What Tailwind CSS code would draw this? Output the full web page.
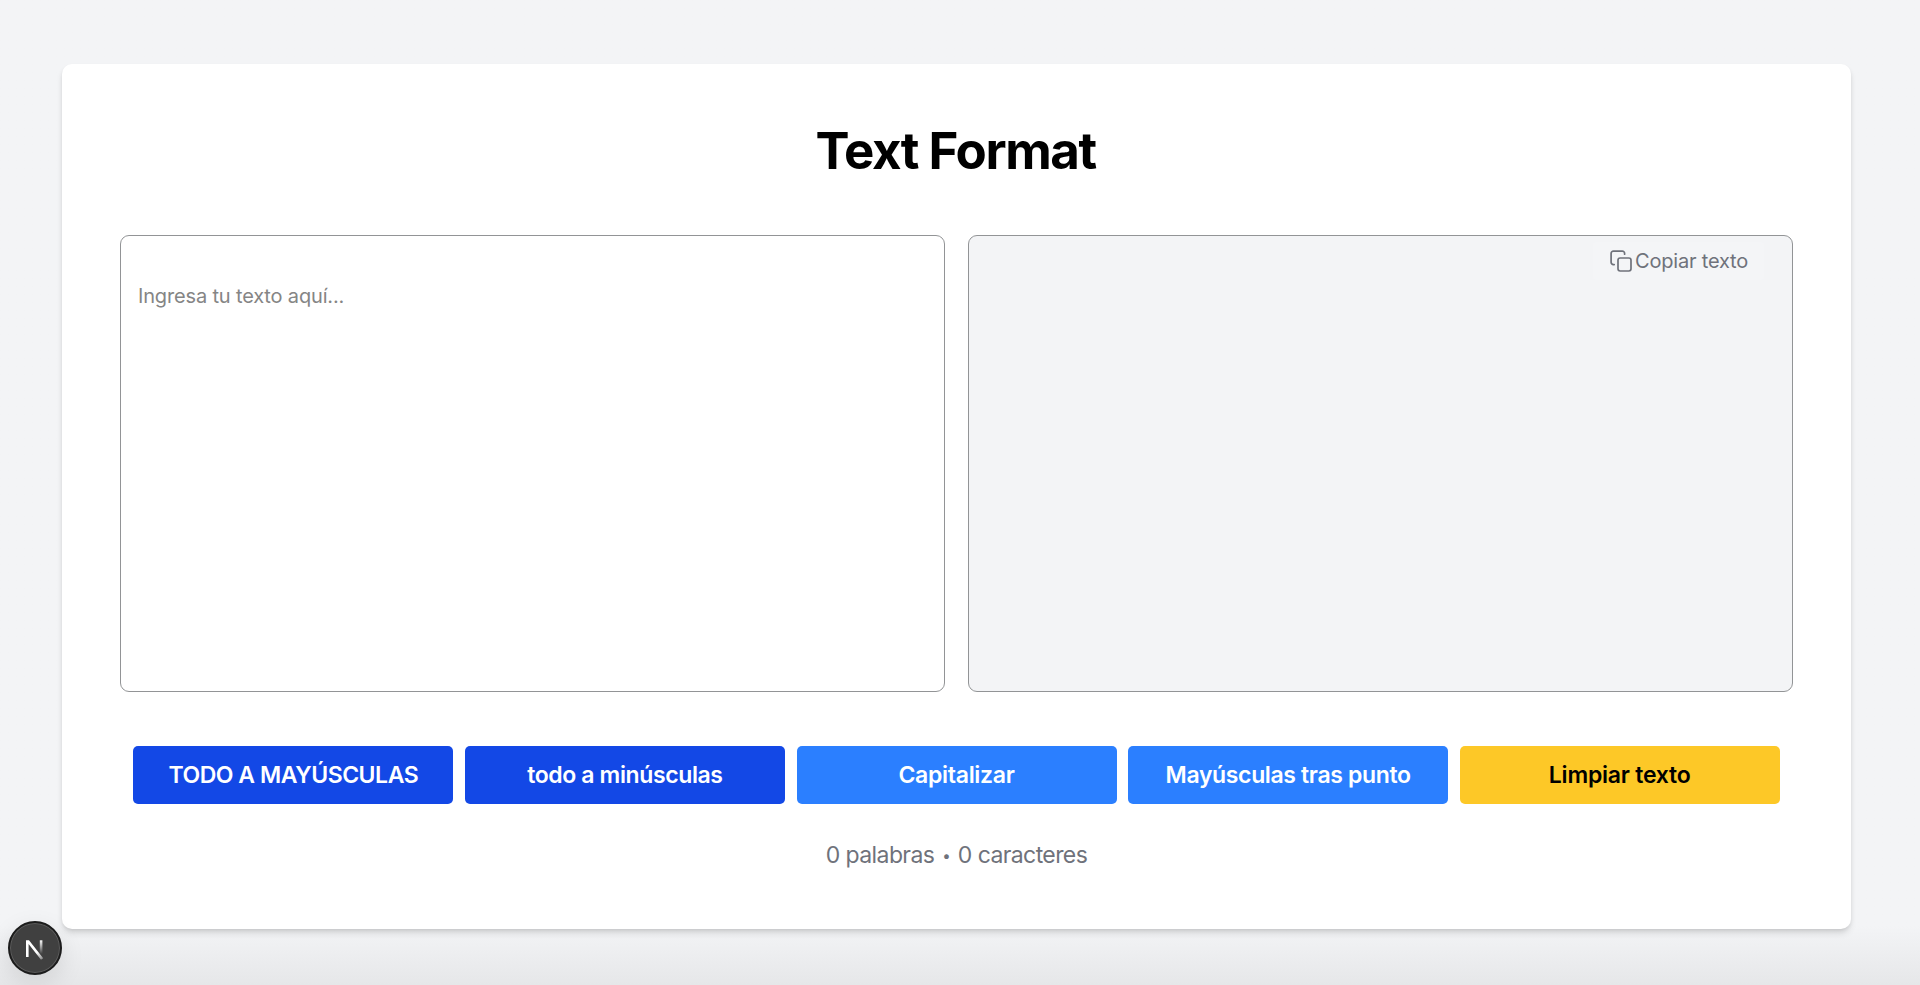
<!DOCTYPE html>
<html lang="es">
<head>
<meta charset="utf-8">
<title>Text Format</title>
<script src="https://cdn.jsdelivr.net/npm/@tailwindcss/browser@4"></script>
</head>
<body class="relative h-[985px] overflow-hidden bg-[#f3f4f6] bg-linear-to-b from-[#f3f4f6] from-94% to-[#e6e7e9] pt-16 pl-[62px] font-[Inter,sans-serif] text-black">
<main class="flex h-[865px] w-[1789px] flex-col items-center rounded-[10px] bg-white px-[58px] pt-14 shadow-[0_5px_7px_-1px_rgba(0,0,0,0.12),0_2px_4px_-1px_rgba(0,0,0,0.1)]">
  <h1 class="pr-[2px] text-[51px] leading-[61px] font-bold tracking-[-1.45px] whitespace-nowrap">Text Format</h1>
  <section class="mt-[54px] grid h-[457px] w-full grid-cols-2 gap-[23px]">
    <textarea class="resize-none rounded-[9px] border border-[#929496] bg-white px-[17px] pt-[45px] text-[20px] leading-[30px] tracking-[-0.16px] placeholder:text-[#858585]" placeholder="Ingresa tu texto aquí..."></textarea>
    <div class="flex items-start justify-end rounded-[9px] border border-[#929496] bg-[#f3f4f6] pt-[6px] pr-[28px]">
      <button class="flex items-center gap-[2px] rounded bg-[#f4f5f7] px-4 py-1 text-[20px] leading-[30px] tracking-[-0.2px] text-[#6f727b]">
        <svg class="size-6" viewBox="0 0 24 24" fill="none" stroke="currentColor" stroke-width="1.7" stroke-linecap="round" stroke-linejoin="round"><rect x="9" y="9" width="13" height="13" rx="2.2"/><path d="M5.2 15.6H4.4A2.3 2.3 0 0 1 2.1 13.3V4.4A2.3 2.3 0 0 1 4.4 2.1H13.3A2.3 2.3 0 0 1 15.6 4.4V5.2"/></svg>
        <span>Copiar texto</span>
      </button>
    </div>
  </section>
  <section class="mt-[54px] flex gap-[11.6px] text-[23px] leading-[58px] font-semibold whitespace-nowrap text-white">
    <button class="h-[58px] w-[320px] rounded-[5px] bg-[#1348e6] tracking-[-0.46px]">TODO A MAYÚSCULAS</button>
    <button class="h-[58px] w-[320px] rounded-[5px] bg-[#1348e6] tracking-[-0.38px]">todo a minúsculas</button>
    <button class="h-[58px] w-[320px] rounded-[5px] bg-[#2b7fff] tracking-[-0.3px]">Capitalizar</button>
    <button class="h-[58px] w-[320px] rounded-[5px] bg-[#2b7fff] tracking-[-0.36px]">Mayúsculas tras punto</button>
    <button class="h-[58px] w-[320px] rounded-[5px] bg-[#fdc827] tracking-[-0.22px] text-black">Limpiar texto</button>
  </section>
  <p class="mt-[34px] h-[34px] text-[23px] leading-[34px] tracking-[-0.6px] text-[#6f727b]">0 palabras <span class="px-[2px] align-[2px] text-[15px] leading-none">•</span> 0 caracteres</p>
</main>
<!-- Next.js dev indicator -->
<div class="absolute top-[921px] left-2 flex size-[54px] items-center justify-center rounded-full border-2 border-[#1c1c1c] bg-[#404040] shadow-[inset_0_0_0_1px_#5c5c5c,0_8px_24px_rgba(0,0,0,0.1)]">
  <svg class="size-[54px] shrink-0" viewBox="0 0 54 54" fill="none">
    <defs>
      <linearGradient id="diag" x1="32" y1="30" x2="38" y2="42" gradientUnits="userSpaceOnUse"><stop stop-color="#fff"/><stop offset="1" stop-color="#fff" stop-opacity="0"/></linearGradient>
      <linearGradient id="stem" x1="33" y1="19" x2="33" y2="33" gradientUnits="userSpaceOnUse"><stop stop-color="#fff"/><stop offset="1" stop-color="#fff" stop-opacity="0"/></linearGradient>
    </defs>
    <path d="M18 19.3H21L35.2 37.2L33 38.8L20.6 23V36H18Z" fill="url(#diag)"/>
    <path d="M31.8 19.3H34.4V33H31.8Z" fill="url(#stem)"/>
  </svg>
</div>
</body>
</html>
